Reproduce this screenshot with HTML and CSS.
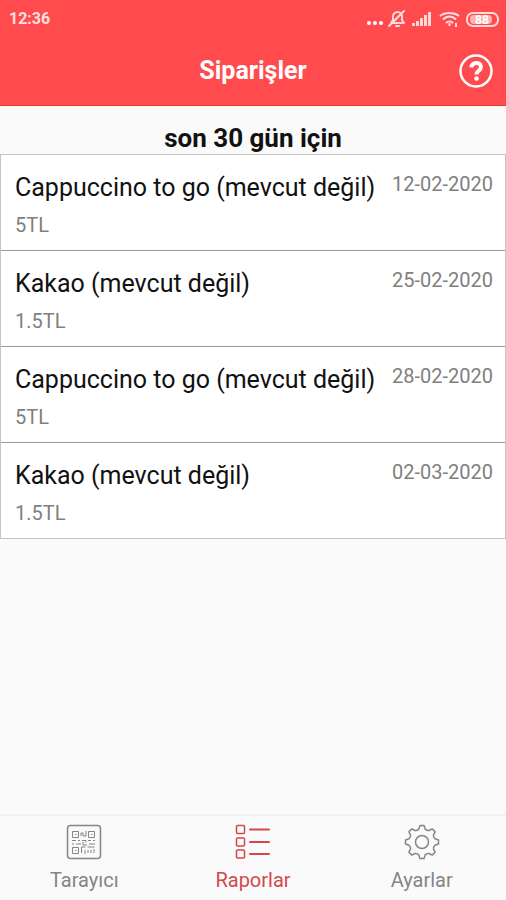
FILE: index.html
```html
<!DOCTYPE html>
<html lang="tr">
<head>
    <meta charset="UTF-8">
    <meta name="viewport" content="width=device-width, initial-scale=1.0">
    <title>Siparişler</title>
    <link rel="stylesheet" href="styles.css">
</head>
<body>
    <header class="header">
        <div class="status-bar">
            <span class="clock">12:36</span>
            <svg class="status-icons" width="134" height="20" viewBox="0 0 134 20" aria-hidden="true">
                <!-- more -->
                <g fill="#fff">
                    <circle cx="3" cy="14" r="2"/>
                    <circle cx="9" cy="14" r="2"/>
                    <circle cx="15" cy="14" r="2"/>
                </g>
                <!-- muted bell -->
                <g fill="none" stroke="#ffd8d8" stroke-width="2" stroke-linecap="round" stroke-linejoin="round">
                    <path d="M25 14h13l-2-3V7c0-2-2-4-4.500-4S27 5 27 7v4z"/>
                    <path d="M30 17h3M23 17L38 2"/>
                </g>
                <!-- signal -->
                <g fill="#ffd8d8">
                    <rect x="46" y="14" width="3" height="3"/>
                    <rect x="50" y="12" width="3" height="5"/>
                    <rect x="54" y="9" width="3" height="8"/>
                    <rect x="58" y="6" width="3" height="11"/>
                    <rect x="62" y="3" width="3" height="14"/>
                </g>
                <!-- wifi -->
                <g fill="none" stroke="#ffe0e0" stroke-width="2">
                    <path d="M74 7c5-4 14-4 19 0M77 10.500c4-4 9-4 13 0M80 14c2-2 5-2 7 0"/>
                    <path d="M83.500 14v3M90 14v4" stroke-width="2"/>
                </g>
                <!-- battery -->
                <rect x="101" y="4" width="31" height="13" rx="6" fill="none" stroke="#ffd8d8" stroke-width="2"/>
                <rect x="104" y="6" width="22" height="9" rx="4" fill="#ffb0b0"/>
                <text class="battery-level" x="116" y="15" text-anchor="middle">88</text>
            </svg>
        </div>
        <div class="title-bar">
            <h1>Siparişler</h1>
            <button class="help" type="button" aria-label="Yardım">
                <svg width="36" height="36" viewBox="0 0 36 36" fill="none" stroke="#fff" aria-hidden="true">
                    <circle cx="18" cy="18" r="15.500" stroke-width="2.500"/>
                    <path d="M13.500 14.500c0-6 9.500-6 9.500-.5 0 3.500-4.500 3.500-4.500 7.500" stroke-width="4"/>
                    <circle cx="18.500" cy="25.500" r="2.300" fill="#fff" stroke="none"/>
                </svg>
            </button>
        </div>
    </header>

    <main>
        <h2>son 30 gün için</h2>
        <ul class="orders">
            <li class="order">
                <div>
                    <div class="name">Cappuccino to go (mevcut değil)</div>
                    <div class="price">5TL</div>
                </div>
                <time class="date" datetime="2020-02-12">12-02-2020</time>
            </li>
            <li class="order">
                <div>
                    <div class="name">Kakao (mevcut değil)</div>
                    <div class="price">1.5TL</div>
                </div>
                <time class="date" datetime="2020-02-25">25-02-2020</time>
            </li>
            <li class="order">
                <div>
                    <div class="name">Cappuccino to go (mevcut değil)</div>
                    <div class="price">5TL</div>
                </div>
                <time class="date" datetime="2020-02-28">28-02-2020</time>
            </li>
            <li class="order">
                <div>
                    <div class="name">Kakao (mevcut değil)</div>
                    <div class="price">1.5TL</div>
                </div>
                <time class="date" datetime="2020-03-02">02-03-2020</time>
            </li>
        </ul>
    </main>

    <nav class="tabs">
        <a class="tab" href="#tarayici">
            <svg width="36" height="36" viewBox="0 0 36 36" fill="none" stroke="currentColor" aria-hidden="true">
                <rect x="1.500" y="1.500" width="33" height="33" rx="3" stroke-width="1.500"/>
                <path d="M6.500 7.500h6v6h-6zM22.500 7.500h6v6h-6zM6.500 23.500h6v6h-6z"/>
                <path d="M9 10.500h1.500M25 10.500h1.500M9 26.500h1.500M15 12V9h2v3h3V7M6 16.500h4m2 0h2m2 0h4v2m2-2h3m2 0h2M6 20h2m2 0h5m2-2v3h4m2-1h6M15.500 29v-6h4m2 0h7M19 26v4m3-4v3m3-3v3m3-4v4"/>
            </svg>
            <span>Tarayıcı</span>
        </a>
        <a class="tab active" href="#raporlar" aria-current="page">
            <svg width="36" height="36" viewBox="0 0 36 36" fill="none" stroke="currentColor" aria-hidden="true">
                <g stroke-width="1.500">
                    <rect x="1.500" y="1.500" width="8" height="8" rx="1"/>
                    <rect x="1.500" y="14" width="8" height="8" rx="1"/>
                    <rect x="1.500" y="26" width="8" height="8" rx="1"/>
                </g>
                <path d="M15 5.500h19M15 18h19M15 30h19" stroke-width="2" stroke-linecap="round"/>
            </svg>
            <span>Raporlar</span>
        </a>
        <a class="tab" href="#ayarlar">
            <svg width="36" height="36" viewBox="-18 -18 36 36" fill="none" stroke="currentColor" stroke-width="1.500" stroke-linejoin="round" aria-hidden="true">
                <path d="M-2-16.500H2L3.200-13Q5-11 7.100-11.500L10.200-13.100 13.100-10.200 11.500-7.100Q11-5 13-3.200L16.500-2V2L13 3.200Q11 5 11.500 7.100L13.100 10.200 10.200 13.100 7.100 11.500Q5 11 3.200 13L2 16.500H-2L-3.200 13Q-5 11-7.100 11.500L-10.200 13.100-13.100 10.200-11.500 7.100Q-11 5-13 3.200L-16.500 2V-2L-13-3.200Q-11-5-11.500-7.100L-13.100-10.200-10.200-13.100-7.100-11.500Q-5-11-3.200-13Z"/>
                <circle r="6.500"/>
            </svg>
            <span>Ayarlar</span>
        </a>
    </nav>
</body>
</html>
```
FILE: styles.css
```css
* {
    box-sizing: border-box;
}
body {
    margin: 0;
    min-height: 100vh;
    display: flex;
    flex-direction: column;
    background: #fafafa;
    color: #111;
    font-family: Roboto, "Liberation Sans", sans-serif;
}
.header {
    background: #ff4b4d;
    border-bottom: 1px solid #d93d2e;
    color: #fff;
}
.status-bar {
    display: flex;
    align-items: center;
    justify-content: space-between;
    height: 37px;
    padding: 0 6px 0 9px;
}
.clock {
    font-size: 16px;
    font-weight: bold;
    color: #ffe0e0;
}
.battery-level {
    font-size: 12px;
    font-weight: bold;
    fill: #fff;
}
.title-bar {
    display: grid;
    grid-template-columns: 1fr auto 1fr;
    align-items: center;
    height: 68px;
    padding: 0 12px;
}
h1 {
    grid-column: 2;
    margin: 0;
    font-size: 25px;
    font-weight: bold;
    line-height: 32px;
}
.help {
    justify-self: end;
    display: flex;
    padding: 0;
    border: none;
    background: none;
    cursor: pointer;
}
main {
    flex: 1;
}
h2 {
    margin: 0;
    padding-top: 16px;
    font-size: 26px;
    font-weight: bold;
    line-height: 32px;
    text-align: center;
}
.orders {
    margin: 0;
    padding: 0;
    list-style: none;
    background: #fff;
    border: 1px solid #c4c4c4;
}
.order {
    display: flex;
    justify-content: space-between;
    padding: 17px 12px 12px 14px;
}
.order + .order {
    border-top: 1px solid #999;
}
.name {
    font-size: 25px;
    line-height: 32px;
}
.price {
    margin-top: 8px;
    font-size: 20px;
    line-height: 26px;
    color: #808080;
}
.date {
    font-size: 20px;
    line-height: 24px;
    color: #808080;
    white-space: nowrap;
}
.tabs {
    display: flex;
    padding: 8px 0;
    border-top: 2px solid #f0f0f5;
}
.tab {
    flex: 1;
    display: flex;
    flex-direction: column;
    align-items: center;
    gap: 8px;
    font-size: 20px;
    line-height: 24px;
    color: #858585;
    text-decoration: none;
}
.tab.active {
    color: #d1494b;
}
```
